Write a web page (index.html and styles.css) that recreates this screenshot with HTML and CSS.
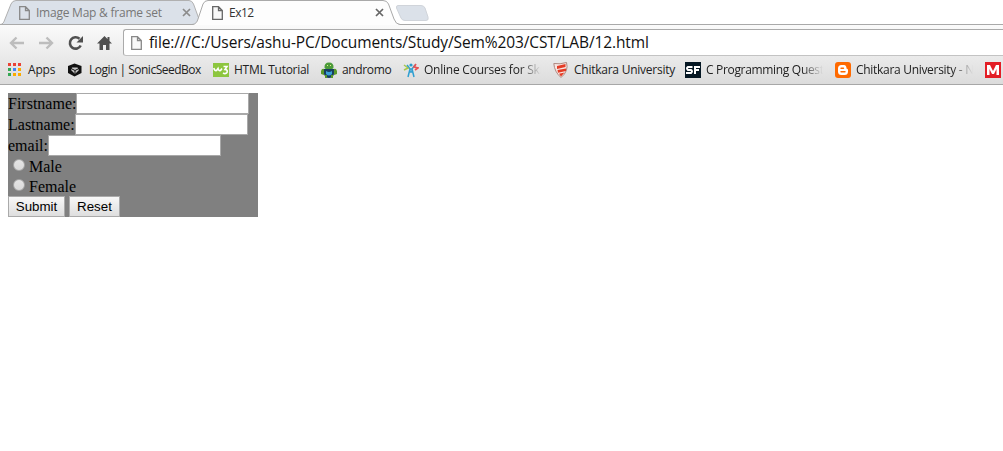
FILE: index.html
```html
<!DOCTYPE html>
<html lang="en">
<head>
<meta charset="utf-8">
<title>Ex12</title>
<link rel="stylesheet" href="styles.css">
</head>
<body>
<header class="browser">
  <div class="tabs">
    <svg class="tab-shapes" width="1003" height="25" viewBox="0 0 1003 25">
      <path d="M0 24.500C3 24.500 4 22 5 19L11 4Q12.500 .5 16 .5H189Q192 .5 193.500 4L201 24.500Z" fill="#dbe1e9" stroke="#b0b0b0"/>
      <path d="M0 24.500H1003" stroke="#a9a9a9"/>
      <path d="M193 25C196 24 197 22 198 19L203 4Q204.500 .5 208 .5H383Q387 .5 388.500 4L394 19Q396 24.500 400 24.500V25Z" fill="#fdfdfd"/>
      <path d="M192 24.500C196 24 197 22 198 19L203 4Q204.500 .5 208 .5H383Q387 .5 388.500 4L394 19Q396 24.500 400 24.500" fill="none" stroke="#a9a9a9"/>
      <path d="M398 5.500H421Q424 5.500 425 8L428 17Q429 20.500 426 20.500H405Q402 20.500 401 18L396.500 8Q396 5.500 398 5.500Z" fill="#dbe1e9" stroke="#d0d4da"/>
    </svg>
    <div class="tab tab-back">
      <svg class="page" viewBox="0 0 11 14"><path d="M.7 .7H6.500L10.300 4.500V13.300H.7ZM6.500 .7V4.500H10.300"/></svg>
      <span class="tab-title t-map">Image Map &amp; frame set</span>
      <svg class="close" viewBox="0 0 9 9"><path d="M1 1L8 8M8 1L1 8"/></svg>
    </div>
    <div class="tab tab-front">
      <svg class="page" viewBox="0 0 11 14"><path d="M.7 .7H6.500L10.300 4.500V13.300H.7ZM6.500 .7V4.500H10.300"/></svg>
      <span class="tab-title t-ex">Ex12</span>
      <svg class="close" viewBox="0 0 9 9"><path d="M1 1L8 8M8 1L1 8"/></svg>
    </div>
  </div>
  <div class="toolbar">
    <svg class="nav" width="112" height="18" viewBox="0 0 112 18">
      <g fill="none" stroke="#bdbdbd" stroke-width="2.400"><path d="M24 9H11M16.500 3.500L11 9L16.500 14.500M39 9H52M46.500 3.500L52 9L46.500 14.500"/></g>
      <path d="M79.500 4.800A5.700 5.700 0 1 0 80.700 11.500" fill="none" stroke="#505050" stroke-width="2.600"/>
      <path d="M83 2V8.500H76.500Z" fill="#505050"/>
      <path d="M104.500 2L97 9.500H99.500V16H103V11H106V16H109.500V9.500H112L109.500 7V3H107.500V5Z" fill="#505050"/>
    </svg>
    <div class="omnibox">
      <svg class="page page-url" viewBox="0 0 11 14"><path d="M.7 .7H6.500L10.300 4.500V13.300H.7ZM6.500 .7V4.500H10.300"/></svg>
      <span class="url">file:///C:/Users/ashu-PC/Documents/Study/Sem%203/CST/LAB/12.html</span>
    </div>
  </div>
  <nav class="bookmarks">
    <a class="mark"><svg class="ico" viewBox="0 0 16 16"><path fill="#ea4335" d="M0 1h3v3H0zM5 1h3v3H5zM10 1h3v3h-3z"/><path fill="#34a853" d="M0 6h3v3H0zM0 11h3v3H0z"/><path fill="#4285f4" d="M5 6h3v3H5z"/><path fill="#fbab00" d="M10 6h3v3h-3zM5 11h3v3H5zM10 11h3v3h-3z"/></svg><span class="label l1">Apps</span></a>
    <a class="mark"><svg class="ico" viewBox="0 0 16 16"><path d="M6.500 1.500L13.500 4V11L6.500 14.500L0 11V4Z" fill="#111"/><path d="M4 5.500H9.500L11 8L7 12L3 8Z" fill="#c8c8c8"/><path d="M3 6.500L7 8.500L11 6.500M7 8.500V12" fill="none" stroke="#111"/></svg><span class="label l2">Login | SonicSeedBox</span></a>
    <a class="mark"><svg class="ico" viewBox="0 0 16 16"><path fill="#8dc63f" d="M0 1h16v14H0z"/><path d="M.8 6Q1.500 9 3.500 8.500L5 6.500Q5.500 9 7.500 8.500L9 6.500M10.500 4.500H14L12 7.500Q15 7.500 14 10.500Q12.500 12.500 10 11" fill="none" stroke="#fff" stroke-width="1.600"/></svg><span class="label l3">HTML Tutorial</span></a>
    <a class="mark"><svg class="ico" viewBox="0 0 16 16"><path d="M3.500 6Q3 .5 8 .5T12.500 6Q11 8 8 8T3.500 6Z" fill="#4b9b39"/><path d="M3 7H13V12Q12 16 8 16T3 12Z" fill="#183f60"/><path d="M5 9Q8 11 11 9V12Q8 15 5 12Z" fill="#3ba1d7"/><path d="M0 9Q1 6 3 7V13L0 12ZM13 7Q15 6 16 9V12L13 13ZM4 13H6V16H4ZM10 13H12V16H10Z" fill="#5b9a29"/><path d="M6 3h1v1H6zM9 3h1v1H9z" fill="#e8ef87"/></svg><span class="label l4">andromo</span></a>
    <a class="mark"><svg class="ico" viewBox="0 0 16 16"><circle cx="8" cy="3" r="1.600" fill="#279dcc"/><path d="M4 3L7 7L5 15M12 3L9 7L11 15M7 7H9V10H7Z" fill="none" stroke="#2e9fd1" stroke-width="1.500"/><path d="M1 3L5 6L1 8" fill="none" stroke="#a6c64c" stroke-width="1.500"/><path d="M13 2L11 5L15 6L12 8" fill="none" stroke="#e75252" stroke-width="1.700"/></svg><span class="label l5 fade">Online Courses for Ski</span></a>
    <a class="mark"><svg class="ico" viewBox="0 0 16 16"><path d="M.8 1.500Q7 2.500 13.500 .5Q16 9 8 15.500Q1.500 10 .8 1.500Z" fill="#f8e6e2" stroke="#af8981"/><path d="M4 4L12.500 2V5L4 7ZM4.500 8L13 6.500V9L5 10.800ZM6 11.800L11.500 10.500L8 14.500Z" fill="#e43b25"/></svg><span class="label l6">Chitkara University</span></a>
    <a class="mark"><svg class="ico" viewBox="0 0 16 16"><path fill="#061824" d="M0 0h16v16H0z"/><path d="M7.500 5H3Q1 6 3 8H6Q8 9 6 11H1M10 12V5H15M10 8H14" fill="none" stroke="#fff" stroke-width="2"/></svg><span class="label l7 fade">C Programming Quest</span></a>
    <a class="mark"><svg class="ico" viewBox="0 0 16 16"><rect width="16" height="16" rx="3" fill="#ff6a00"/><path d="M6.500 3H9Q11.500 3 11.500 6.500Q13 6.500 13 8V9.500Q13 13 9.500 13H6.500Q3 13 3 9.500V6.500Q3 3 6.500 3Z" fill="#fff"/><path d="M6 6.200H8.500M6 9.800H10" stroke="#ff6a00" stroke-width="1.400" stroke-linecap="round"/></svg><span class="label l8 fade">Chitkara University - N</span></a>
    <a class="mark"><svg class="ico" viewBox="0 0 16 16"><path fill="#e31e26" d="M0 0h16v16H0z"/><path d="M2 13V3H5L8 9L11 3H14V13H11.500V7L9 12H7L4.500 7V13Z" fill="#fff"/></svg></a>
  </nav>
</header>
<form class="form">
  <div class="row"><label for="first">Firstname:</label><input class="field" id="first" type="text"></div>
  <div class="row"><label for="last">Lastname:</label><input class="field" id="last" type="text"></div>
  <div class="row"><label for="email">email:</label><input class="field" id="email" type="text"></div>
  <div class="row choice"><input class="radio" type="radio" name="sex" id="male"><label for="male">Male</label></div>
  <div class="row choice"><input class="radio" type="radio" name="sex" id="female"><label for="female">Female</label></div>
  <div class="row buttons"><button class="btn submit" type="button">Submit</button><button class="btn reset" type="reset">Reset</button></div>
</form>
</body>
</html>
```

FILE: styles.css
```css
* { box-sizing: border-box; }
body { margin: 0; background: #fff; overflow: hidden; font-family: "Liberation Serif", serif; }
.browser { height: 85px; border-bottom: 1px solid #a7a7a7; font-family: "Open Sans", "Noto Sans", sans-serif; color: #222; background: linear-gradient(#fbfbfb 24px, #dcdcdc 84px); }
.tabs { height: 25px; display: flex; position: relative; background: #fff; }
.tab-shapes { position: absolute; left: 0; top: 0; }
.tab { display: flex; align-items: center; height: 25px; position: relative; font-size: 12px; gap: 6px; }
.tab-back { width: 193px; padding-left: 19px; color: #777; }
.tab-front { width: 210px; padding-left: 19px; padding-right: 19px; color: #333; }
.tab .close { margin-left: auto; }
.tab-title { white-space: nowrap; }
.t-map { letter-spacing: -.23px; }
.t-ex { letter-spacing: -.5px; }
.page { width: 11px; height: 14px; flex: none; fill: #f8f8f8; stroke: #666; stroke-width: 1.3; }
.tab-back .page { fill: none; stroke: #888; }
.page-url { stroke: #888; margin-left: 7px; }
.close { width: 9px; height: 9px; flex: none; stroke: #666; stroke-width: 1.7; }
.tab-back .close { stroke: #8b8b8b; margin-right: 2px; }
.toolbar { height: 31px; display: flex; padding-top: 4px; }
.nav { flex: none; margin: 5px 11px 0 0; }
.omnibox { flex: 1; height: 27px; border: 1px solid #aaa; border-right: 0; border-bottom-color: #c3c3c3; border-radius: 3px 0 0 3px; background: #fff; display: flex; align-items: center; gap: 7px; }
.url { font-size: 15.5px; line-height: 24px; padding-bottom: 2px; color: #111; white-space: nowrap; letter-spacing: -.11px; }
.bookmarks { height: 28px; display: flex; align-items: center; gap: 12px; padding-left: 8px; overflow: hidden; }
.mark { display: flex; align-items: center; gap: 5px; flex: none; }
.mark:first-child { gap: 4px; }
.ico { width: 16px; height: 16px; }
.label { font-size: 12px; line-height: 16px; white-space: nowrap; letter-spacing: -.2px; }
.l1 { width: 28px; }
.l2 { width: 112px; letter-spacing: -.5px; }
.l3 { width: 75px; letter-spacing: -.28px; }
.l4 { width: 49px; letter-spacing: -.35px; }
.l5 { width: 117px; letter-spacing: -.23px; }
.l6 { width: 99px; letter-spacing: -.25px; }
.l7 { width: 117px; letter-spacing: -.32px; }
.l8 { width: 117px; letter-spacing: -.3px; }
.fade { -webkit-mask-image: linear-gradient(to right, #000 82%, transparent); mask-image: linear-gradient(to right, #000 82%, transparent); }
.form { width: 250px; margin: 8px 0 0 8px; background: #808080; font-size: 16px; color: #000; }
.row { height: 21px; display: flex; align-items: center; line-height: 20px; }
.field { width: 173px; height: 21px; margin: 0; padding: 1px; border: 1px solid #a9a9a9; background: #fff; }
.choice { height: 20px; }
.choice label { padding-top: 2px; }
.radio { appearance: none; width: 12px; height: 12px; margin: 0 4px 2px 5px; border: 1px solid #a5a5a5; border-radius: 50%; background: linear-gradient(#e5e5e5, #dadada); }
.buttons { gap: 4px; }
.btn { height: 21px; padding: 0; border: 1px solid #aaa; background: linear-gradient(#f8f8f8, #dedede); font: 13.33px/18px "Liberation Sans", sans-serif; color: #000; }
.submit { width: 57px; }
.reset { width: 51px; }
```
